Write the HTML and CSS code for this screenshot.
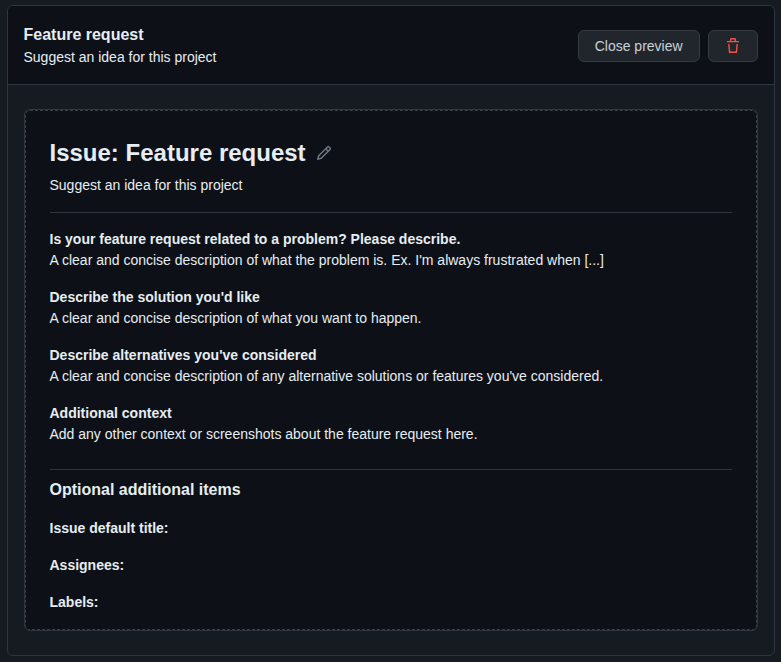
FILE: index.html
```html
<!DOCTYPE html>
<html lang="en">
<head>
<meta charset="utf-8">
<title>Feature request</title>
<link rel="stylesheet" href="styles.css">
</head>
<body>
<main class="card">
  <header class="card-header">
    <div>
      <h3 class="name">Feature request</h3>
      <p class="about">Suggest an idea for this project</p>
    </div>
    <div class="actions">
      <button class="btn">Close preview</button>
      <button class="btn btn-icon" aria-label="Delete"><svg width="16" height="16" viewBox="0 0 16 16" fill="none" stroke="currentColor" stroke-width="1.4"><path d="M2 3.6h12M5.7 3.6V1.5q0-.7.7-.7h3.2q.7 0 .7.7v2.1M3.8 6l.8 8.2h6.8l.8-8.2"/></svg></button>
    </div>
  </header>
  <div class="card-body">
    <section class="preview">
      <div class="preview-inner">
      <h2 class="title">Issue: Feature request <svg class="pencil" width="16" height="16" viewBox="0 0 16 16" fill="currentColor"><path d="M11.013 1.427a1.75 1.75 0 0 1 2.474 0l1.086 1.086a1.75 1.75 0 0 1 0 2.474l-8.61 8.61c-.21.21-.47.364-.756.445l-3.251.93a.75.75 0 0 1-.927-.928l.929-3.25c.081-.286.235-.547.445-.758l8.61-8.61Zm.176 4.823L9.75 4.81l-6.286 6.287a.253.253 0 0 0-.064.108l-.558 1.953 1.953-.558a.253.253 0 0 0 .108-.064Zm1.238-3.763a.25.25 0 0 0-.354 0L10.811 3.75l1.439 1.44 1.263-1.263a.25.25 0 0 0 0-.354Z"/></svg></h2>
      <p class="lead">Suggest an idea for this project</p>
      <div class="content">
        <p><strong>Is your feature request related to a problem? Please describe.</strong><br>A clear and concise description of what the problem is. Ex. I'm always frustrated when [...]</p>
        <p><strong>Describe the solution you'd like</strong><br>A clear and concise description of what you want to happen.</p>
        <p><strong>Describe alternatives you've considered</strong><br>A clear and concise description of any alternative solutions or features you've considered.</p>
        <p><strong>Additional context</strong><br>Add any other context or screenshots about the feature request here.</p>
      </div>
      <h4 class="optional">Optional additional items</h4>
      <p class="field">Issue default title:</p>
      <p class="field">Assignees:</p>
      <p class="field">Labels:</p>
      </div>
    </section>
  </div>
</main>
</body>
</html>
```

FILE: styles.css
```css
* { box-sizing: border-box; }
body {
  margin: 0;
  padding: 5px 6.4px 6px 6.5px;
  background: #161b22;
  color: #e6edf3;
  font: 14px/21px "Liberation Sans", Arial, sans-serif;
}
h2, h3, h4, p { margin: 0; }
.card {
  height: 651px;
  border: 1px solid #30363d;
  border-radius: 6px;
}
.card-header {
  display: flex;
  justify-content: space-between;
  align-items: center;
  height: 79px;
  padding: 0 16px;
  background: #0d1117;
  border-bottom: 1px solid #30363d;
  border-radius: 5px 5px 0 0;
}
.name { font-size: 16px; line-height: 24px; }
.actions { display: flex; gap: 8px; padding-top: 2px; }
.btn {
  height: 32px;
  padding: 0 16px;
  border: 1px solid #363b42;
  border-radius: 6px;
  background: #21262d;
  color: #c9d1d9;
  font: 14px/20px "Liberation Sans", Arial, sans-serif;
}
.btn-icon { width: 50px; color: #f85149; }
.btn-icon svg { display: block; }
.card-body { padding: 24px 16px; }
.preview {
  height: 522px;
  border: 1px solid #30363d;
  border-radius: 6px;
  background: #0d1117;
}
.preview-inner {
  height: 100%;
  padding: 24px;
  border: 1px dashed #3a4047;
  border-radius: 5px;
}
.title { font-size: 24px; line-height: 36px; }
.pencil { display: inline-block; margin-left: 4px; color: #6e7681; vertical-align: 0; }
.lead { margin-top: 4px; }
.content {
  display: flex;
  flex-direction: column;
  gap: 16px;
  margin-top: 16px;
  padding: 16px 0 24px;
  border-top: 1px solid #30363d;
  border-bottom: 1px solid #30363d;
}
.optional { margin-top: 8px; font-size: 16px; line-height: 24px; }
.field { margin-top: 16px; font-weight: 600; }
```
